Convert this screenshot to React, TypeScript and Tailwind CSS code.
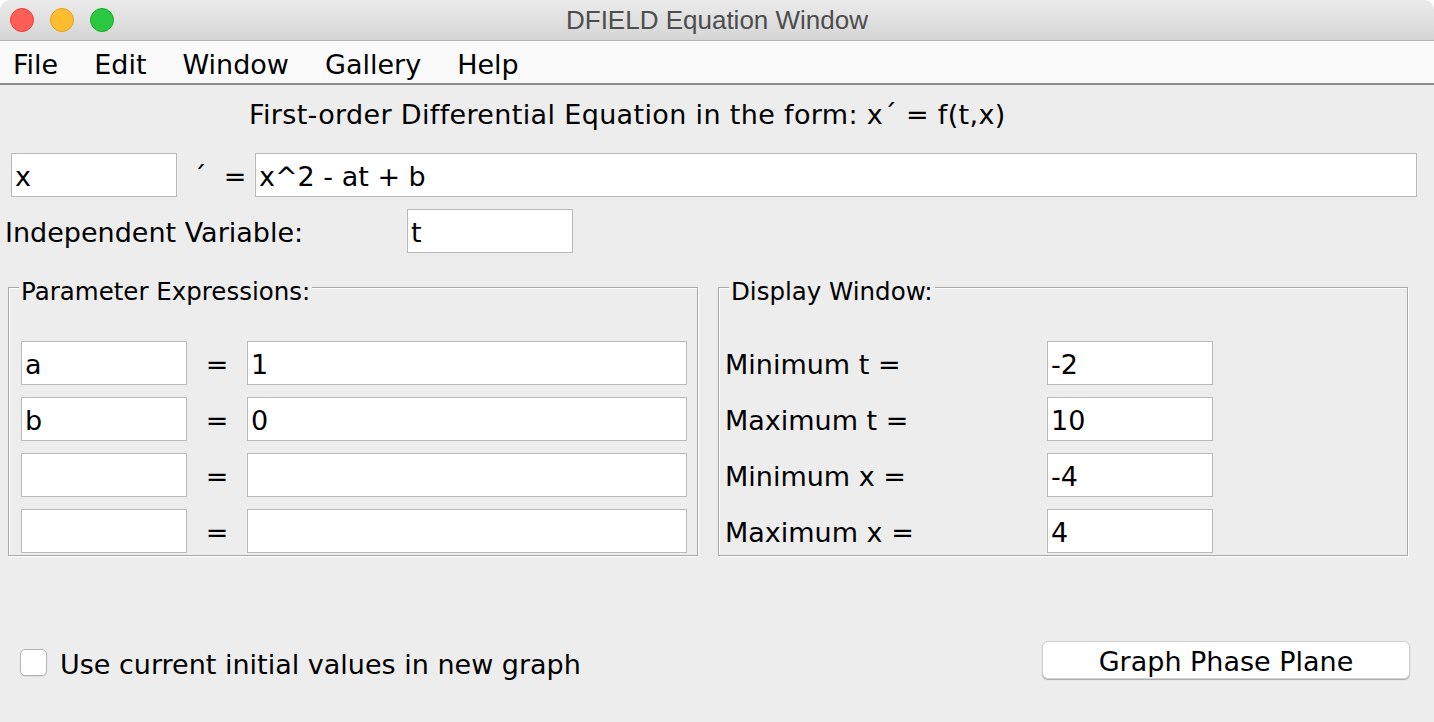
import React from 'react'

interface FieldProps {
  value?: string
  className: string
}

const Field: React.FC<FieldProps> = ({ value, className }) => (
  <input
    readOnly
    defaultValue={value ?? ''}
    className={`h-[44px] border border-[#b9b9b9] bg-white pl-[3px] pt-[2px] text-[27px] leading-[40px] text-black outline-none ${className}`}
  />
)

const GroupTitle: React.FC<{ text: string }> = ({ text }) => (
  <span className="absolute left-[10px] -top-[10px] bg-[#ededed] px-[2px] text-[24.5px] leading-[28px] text-black">{text}</span>
)

const params = [
  { name: 'a', value: '1' },
  { name: 'b', value: '0' },
  { name: '', value: '' },
  { name: '', value: '' },
]

const windowRows = [
  { label: 'Minimum t =', value: '-2' },
  { label: 'Maximum t =', value: '10' },
  { label: 'Minimum x =', value: '-4' },
  { label: 'Maximum x =', value: '4' },
]

const App: React.FC = () => {
  return (
    <div className="h-[722px] w-[1434px] bg-white">
      <div className="flex h-[722px] w-[1434px] flex-col overflow-hidden rounded-t-[10px] bg-[#ededed] font-['DejaVu_Sans',sans-serif] text-black">
        {/* title bar */}
        <div className="grid h-[41px] shrink-0 grid-cols-[1fr_auto_1fr] items-center border-b border-[#b3b3b3] bg-gradient-to-b from-[#ebebeb] to-[#d5d5d5]">
          <div className="flex items-center gap-[16px] pl-[10px]">
            <span className="h-[24px] w-[24px] rounded-full border border-[#e0443e] bg-[#fd5f57]"></span>
            <span className="h-[24px] w-[24px] rounded-full border border-[#dea123] bg-[#febc2e]"></span>
            <span className="h-[24px] w-[24px] rounded-full border border-[#1aab29] bg-[#2ac840]"></span>
          </div>
          <span className="font-['Liberation_Sans',sans-serif] text-[26px] leading-[30px] text-[#4d4d4d]">DFIELD Equation Window</span>
          <div></div>
        </div>

        {/* menu bar */}
        <div className="flex h-[44px] shrink-0 items-center gap-[36px] border-b-2 border-[#8c8c8c] bg-[#fafafa] pl-[13px] pt-[5px] text-[27px] leading-[32px]">
          <span>File</span>
          <span>Edit</span>
          <span>Window</span>
          <span>Gallery</span>
          <span>Help</span>
        </div>

        <div className="mt-[14px] pl-[249px] text-[27px] leading-[32px] tracking-[0.35px]">First-order Differential Equation in the form: x´ = f(t,x)</div>

        <div className="mt-[22px] flex items-center pl-[11px] text-[27px]">
          <Field value="x" className="w-[166px]" />
          <span className="w-[78px] whitespace-pre pl-[16px] pt-[3px] leading-[32px]">´  =</span>
          <Field value="x^2 - at + b" className="w-[1162px]" />
        </div>

        <div className="mt-[12px] flex items-center text-[27px]">
          <span className="w-[407px] pl-[5px] pt-[3px] leading-[32px]">Independent Variable:</span>
          <Field value="t" className="w-[166px]" />
        </div>

        <div className="mt-[34px] flex gap-[20px] pl-[8px]">
          <div className="relative w-[690px] border border-[#a8a8a8] pb-[2px] pl-[12px] pt-[53px] shadow-[1px_1px_0_#fff,inset_1px_1px_0_#fff]">
            <GroupTitle text="Parameter Expressions:" />
            <div className="flex flex-col gap-[12px]">
              {params.map((p, i) => (
                <div key={i} className="flex items-center">
                  <Field value={p.name} className="w-[166px]" />
                  <span className="w-[60px] pt-[3px] text-center text-[27px] leading-[32px]">=</span>
                  <Field value={p.value} className="w-[440px]" />
                </div>
              ))}
            </div>
          </div>

          <div className="relative w-[690px] border border-[#a8a8a8] pb-[2px] pl-[6px] pt-[53px] shadow-[1px_1px_0_#fff,inset_1px_1px_0_#fff]">
            <GroupTitle text="Display Window:" />
            <div className="flex flex-col gap-[12px]">
              {windowRows.map(r => (
                <div key={r.label} className="flex items-center">
                  <span className="w-[322px] pt-[3px] text-[27px] leading-[32px]">{r.label}</span>
                  <Field value={r.value} className="w-[166px]" />
                </div>
              ))}
            </div>
          </div>
        </div>

        <div className="mt-[85px] flex h-[38px] items-center justify-between pl-[20px] pr-[24px]">
          <label className="flex items-center gap-[13px]">
            <span className="mt-[5px] h-[27px] w-[27px] rounded-[5px] border border-[#b3b3b3] bg-white shadow-[0_1px_1px_rgba(0,0,0,0.08)]"></span>
            <span className="pt-[9px] text-[27px] leading-[32px]">Use current initial values in new graph</span>
          </label>
          <button className="h-[38px] w-[368px] rounded-[6px] border border-[#d0d0d0] bg-white pt-[3px] text-[27px] leading-[32px] text-black shadow-[0_1px_1px_rgba(0,0,0,0.3)]">
            Graph Phase Plane
          </button>
        </div>
      </div>
    </div>
  )
}

export default App
